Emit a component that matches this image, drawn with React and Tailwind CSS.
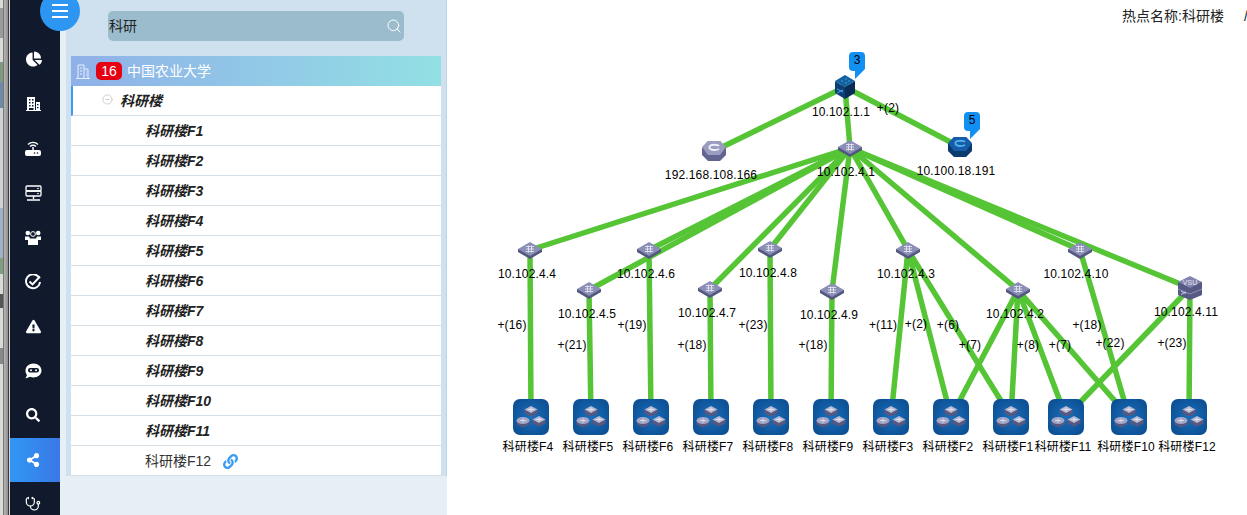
import { Search, Stethoscope, CircleMinus } from 'lucide-react'
import { FaChartPie, FaExclamationTriangle, FaSearch, FaShareAlt, FaLink } from 'react-icons/fa'

const floors = ['F1', 'F2', 'F3', 'F4', 'F5', 'F6', 'F7', 'F8', 'F9', 'F10', 'F11']

const sw = {
  n44: [530, 250, '10.102.4.4', 527, 274],
  n46: [649, 250, '10.102.4.6', 646, 274],
  n45: [589, 290, '10.102.4.5', 587, 314],
  n47: [710, 289, '10.102.4.7', 707, 313],
  n48: [770, 249, '10.102.4.8', 768, 273],
  n49: [832, 291, '10.102.4.9', 829, 315],
  n43: [908, 250, '10.102.4.3', 906, 274],
  n42: [1018, 290, '10.102.4.2', 1015, 314],
  n410: [1080, 250, '10.102.4.10', 1076, 274],
}

const leaves = {
  F4: [531, 528], F5: [591, 588], F6: [651, 648], F7: [711, 708], F8: [771, 768], F9: [831, 828],
  F3: [891, 888], F2: [951, 948], F1: [1011, 1008], F11: [1066, 1063], F10: [1129, 1126], F12: [1189, 1187],
}

const root = [845, 87]
const core = [850, 148]
const vsu = [1190, 288]

const down = [
  ['n44', 'F4'], ['n45', 'F5'], ['n46', 'F6'], ['n47', 'F7'], ['n48', 'F8'], ['n49', 'F9'],
  ['n43', 'F3'], ['n43', 'F2'], ['n43', 'F1'], ['n42', 'F2'], ['n42', 'F1'], ['n42', 'F11'], ['n42', 'F10'],
  ['n410', 'F10'],
]

const counts = [
  ['+(2)', 888, 108], ['+(16)', 512, 325], ['+(21)', 572, 345], ['+(19)', 632, 325], ['+(18)', 692, 345],
  ['+(23)', 753, 325], ['+(18)', 813, 345], ['+(11)', 883, 325], ['+(2)', 916, 324], ['+(6)', 948, 325],
  ['+(7)', 970, 345], ['+(8)', 1028, 345], ['+(7)', 1060, 345], ['+(18)', 1087, 325], ['+(22)', 1110, 343],
  ['+(23)', 1172, 343],
]

function BuildingIcon() {
  return (
    <svg width="15" height="14" viewBox="0 0 15 14" fill="#fff">
      <path d="M1 0h8v13h1V5h4v8h1v1H0v-1h1z" />
      <path d="M3 2h1.500v1.500H3zM6 2h1.500v1.500H6zM3 5h1.500v1.500H3zM6 5h1.500v1.500H6zM3 8h1.500v1.500H3zM6 8h1.500v1.500H6zM3 11h4.500v2H3zM11 7h1.500v1.300H11zM11 10h1.500v1.300H11z" fill="#111a2c" />
    </svg>
  )
}

function RouterIcon() {
  return (
    <svg width="18" height="16" viewBox="0 0 18 16" fill="none">
      <path d="M4 4.500a7 7 0 0 1 10 0M6 6.500a4.200 4.200 0 0 1 6 0" stroke="#fff" strokeWidth="1.300" />
      <path d="M9 7v4" stroke="#fff" strokeWidth="1.500" />
      <rect x="1" y="10" width="16" height="6" rx="2" fill="#fff" />
      <circle cx="10.500" cy="13" r="0.800" fill="#111a2c" />
      <circle cx="13.500" cy="13" r="0.800" fill="#111a2c" />
    </svg>
  )
}

function ServerIcon() {
  return (
    <svg width="17" height="16" viewBox="0 0 17 16" fill="none">
      <rect x="1" y="1" width="15" height="5" rx="1" stroke="#fff" strokeWidth="1.300" />
      <rect x="1" y="6" width="15" height="5" rx="1" stroke="#fff" strokeWidth="1.300" />
      <path d="M8.500 11v3M2 15h13" stroke="#fff" strokeWidth="1.400" />
      <circle cx="13" cy="3.500" r="0.800" fill="#fff" />
      <circle cx="13" cy="8.500" r="0.800" fill="#fff" />
    </svg>
  )
}

function UsersIcon() {
  return (
    <svg width="16" height="15" viewBox="0 0 16 15" fill="#fff">
      <circle cx="2.800" cy="3" r="2.300" />
      <circle cx="13.200" cy="3" r="2.300" />
      <circle cx="8" cy="4" r="2.400" fill="none" stroke="#fff" strokeWidth="1" />
      <path d="M0 6.500h4l1 2h6l1-2h4v3.500h-3V15H3v-5H0z" />
    </svg>
  )
}

function CheckIcon() {
  return (
    <svg width="17" height="16" viewBox="0 0 17 16" fill="none" stroke="#fff" strokeWidth="1.900">
      <path d="M13.800 3.300A7 7 0 1 0 15 8" />
      <path d="M4.500 7.500l3 3 7.500-8" />
    </svg>
  )
}

function BotIcon() {
  return (
    <svg width="17" height="16" viewBox="0 0 17 16">
      <path d="M8.500 0.500c4.400 0 8 3 8 7s-3.600 7-8 7c-1.200 0-2.400-.2-3.400-.7L0.500 15.500l1.500-3.500C1 10.800 .5 9.200 .5 7.500c0-4 3.600-7 8-7z" fill="#fff" />
      <rect x="3" y="5" width="11" height="4.500" rx="2.200" fill="#111a2c" />
      <circle cx="6" cy="7.200" r="1" fill="#fff" />
      <circle cx="11" cy="7.200" r="1" fill="#fff" />
    </svg>
  )
}

function Switch({ x, y }) {
  return (
    <g transform={`translate(${x - 12} ${y - 8})`}>
      <path d="M0 7v3l12 7 12-7V7z" fill="#54577f" />
      <path d="M12 0L24 7 12 14 0 7z" fill="#8b8eb5" />
      <path d="M8 4.500h8M8 7h8M8 9.500h8M10.500 3.500v7M13.500 3.500v7" stroke="#e4e5f0" strokeWidth="0.900" fill="none" />
    </g>
  )
}

function Cloud({ x, y, blue }) {
  return (
    <g transform={`translate(${x - 12} ${y - 10})`}>
      <path d="M6 0h12l6 7v7l-6 6H6l-6-6V7z" fill={blue ? '#0b3a70' : '#62658f'} />
      <path d="M6 0h12l6 6-6 8H6L0 6z" fill={blue ? '#155da8' : '#9a9cc0'} />
      <path d="M17 5c-1-1.500-8-2-9.500 .5-.8 2 1.500 3.500 4.500 3.500 2 0 4-.3 5-1.200" stroke={blue ? '#4fb0ee' : '#f0f0f8'} strokeWidth="1.800" fill="none" />
    </g>
  )
}

function RootCube({ x, y }) {
  return (
    <g transform={`translate(${x - 10} ${y - 12})`}>
      <path d="M0 6v12l10 6V12z" fill="#0c3f78" />
      <path d="M20 6v12l-10 6V12z" fill="#082c57" />
      <path d="M10 0l10 6-10 6L0 6z" fill="#13619f" />
      <path d="M6 6h2M10 4h2M10 8h2M13 6h2" stroke="#3c9bdc" strokeWidth="1.200" />
      <path d="M2 14l6 3M2 18l6-3" stroke="#4fa6e0" strokeWidth="1" />
    </g>
  )
}

function Vsu({ x, y }) {
  return (
    <g transform={`translate(${x - 12} ${y - 12})`}>
      <path d="M0 6v13l12 5 12-5V6z" fill="#565983" />
      <path d="M0 13l12 5 12-5" stroke="#8b8eb5" strokeWidth="1" fill="none" />
      <path d="M12 0l12 6-12 6L0 6z" fill="#8184ad" />
      <text x="12" y="8.500" textAnchor="middle" fontSize="7" fill="#e4e5f0">VSU</text>
      <path d="M3 15l5 2.500M3 18.500l5-2.500" stroke="#c9cbe0" strokeWidth="1" />
    </g>
  )
}

function Device({ x, y, round }) {
  return (
    <g transform={`translate(${x} ${y})`}>
      <path d="M0 3.500v4l6.500 3 6.500-3v-4z" fill="#565880" />
      {round ? (
        <ellipse cx="6.500" cy="3.500" rx="6.500" ry="3.500" fill="#a3a5c6" />
      ) : (
        <path d="M6.500 0l6.500 3.500-6.500 3.500L0 3.500z" fill="#b6b8d2" />
      )}
      <path d="M3.500 3.500h6M6.500 1.500v4" stroke="#eeeef6" strokeWidth="0.700" />
    </g>
  )
}

function Leaf({ x }) {
  return (
    <g transform={`translate(${x - 18} 399)`}>
      <rect width="36" height="36" rx="7" fill="url(#leafFill)" />
      <Device x={11.500} y={7} />
      <Device x={3.500} y={18} round />
      <Device x={19.500} y={17} />
    </g>
  )
}

function Badge({ x, y, n }) {
  return (
    <div className="absolute w-4 h-[28px]" style={{ left: x - 447, top: y }}>
      <svg width="16" height="28" viewBox="0 0 16 28" className="absolute inset-0">
        <path d="M4 0h8a4 4 0 0 1 4 4v13L6 27v-8H4a4 4 0 0 1-4-4V4a4 4 0 0 1 4-4z" fill="#1190f2" />
      </svg>
      <span className="absolute inset-x-0 top-0 text-center text-[12px] leading-[17px] text-black">{n}</span>
    </div>
  )
}

function Label({ x, y, children }) {
  return (
    <span
      className="absolute -translate-x-1/2 -translate-y-1/2 whitespace-nowrap text-[12px] leading-none tracking-[0.15px] text-black"
      style={{ left: x - 447, top: y }}
    >
      {children}
    </span>
  )
}

function NavIcon({ children, active }) {
  return (
    <div className={`h-[44.5px] flex items-center justify-center pr-[4px] text-white ${active ? 'bg-gradient-to-r from-[#2f97f4] to-[#3a78e6]' : ''}`}>
      {children}
    </div>
  )
}

export default function App() {
  const line = (key, a, b) => (
    <line key={key} x1={a[0]} y1={a[1]} x2={b[0]} y2={b[1]} stroke="#55c435" strokeWidth={5.500} />
  )

  return (
    <div className="relative flex w-[1247px] h-[515px] overflow-hidden bg-white font-['Liberation_Sans','Noto_Sans_CJK_SC',sans-serif]">

      {/* edge of the window behind */}
      <div className="flex w-[10px] shrink-0">
        <div className="w-[3px] flex flex-col bg-[#d9d9d6]">
          <div className="h-[30px] mt-[8px] bg-[#9a9a9a]" />
          <div className="h-[20px] mt-[24px] bg-[#7f9a7d]" />
          <div className="h-[26px] bg-[#6f8aa8]" />
          <div className="h-[100px] bg-[#cfd3d6]" />
          <div className="h-[50px] bg-[#9fb3c6]" />
          <div className="h-[16px] bg-[#7f9f7d]" />
          <div className="h-[14px] mt-[20px] bg-[#555]" />
          <div className="h-[16px] mt-[40px] bg-[#888]" />
        </div>
        <div className="w-[1px] bg-[#777]" />
        <div className="w-[4px] bg-gradient-to-r from-[#b5b5b5] to-[#8f8f8f]" />
        <div className="w-[1px] bg-[#3a3a3a]" />
        <div className="w-[1px] bg-[#d5d5d5]" />
      </div>

      {/* nav */}
      <nav className="w-[50px] shrink-0 bg-[#111a2c] pt-[37px]">
        <NavIcon><FaChartPie size={16} className="ml-[1px]" /></NavIcon>
        <NavIcon><BuildingIcon /></NavIcon>
        <NavIcon><RouterIcon /></NavIcon>
        <NavIcon><ServerIcon /></NavIcon>
        <NavIcon><UsersIcon /></NavIcon>
        <NavIcon><CheckIcon /></NavIcon>
        <NavIcon><FaExclamationTriangle size={15} /></NavIcon>
        <NavIcon><BotIcon /></NavIcon>
        <NavIcon><FaSearch size={14} /></NavIcon>
        <NavIcon active><FaShareAlt size={14} /></NavIcon>
        <NavIcon><Stethoscope size={16} strokeWidth={1.800} /></NavIcon>
      </nav>

      <button className="absolute left-[40px] top-[-9px] w-10 h-10 rounded-full bg-[#2d96f3] flex flex-col items-center justify-end gap-1 pb-[13px]">
        <span className="block w-4 h-[2px] bg-white" />
        <span className="block w-4 h-[2px] bg-white" />
        <span className="block w-4 h-[2px] bg-white" />
      </button>

      {/* tree panel */}
      <aside className="w-[387px] shrink-0 bg-[#e6eef6] pl-[6px]">
        <div className="h-[476px] bg-[#cfe1ef] pl-[5px] pr-[5px] border-r border-[#bcd5e6]">
          <div className="h-[56px] pl-[37px] pt-[11px]">
            <div className="w-[296px] h-[30px] rounded-[5px] bg-[#9bbccd] flex items-center justify-between pl-[1px] pr-[2px] text-[14px] text-[#222]">
              <span>科研</span>
              <Search size={16} strokeWidth={1.500} className="text-white -mt-[1px]" />
            </div>
          </div>
          <div className="w-[370px]">
            <div className="h-[30px] flex items-center pl-[5px] bg-gradient-to-r from-[#8fb0e8] to-[#92e0e4] text-[14px] text-white">
              <svg width="14" height="15" viewBox="0 0 14 15" fill="none" stroke="#fff" strokeWidth="0.900" className="opacity-90">
                <path d="M2 14V1h6v13M8 5h4v9M0 14.500h14M4 4h2M4 7h2M4 10h2M10 8h1M10 11h1" />
              </svg>
              <span className="ml-[6px] w-[26px] h-[18px] rounded-[5px] bg-[#e60012] text-center leading-[18px]">16</span>
              <span className="ml-[5px]">中国农业大学</span>
            </div>
            <div className="h-[30px] flex items-center bg-white border-l-2 border-b border-l-[#3b9bf2] border-b-[#d5dfe8] pl-[29px]">
              <CircleMinus size={11} strokeWidth={1.200} className="text-[#aaa] -mt-[3px]" />
              <span className="ml-[7px] mt-[1px] text-[14px] font-bold italic text-[#222]">科研楼</span>
            </div>
            {floors.map((f) => (
              <div key={f} className="h-[30px] flex items-center bg-white border-b border-[#d5dfe8] pl-[74px] pt-[2px] text-[14px] font-bold italic text-[#222]">
                科研楼{f}
              </div>
            ))}
            <div className="h-[30px] flex items-center bg-white border-b border-[#d5dfe8] pl-[74px] pt-[2px] text-[14px] text-[#333]">
              科研楼F12
              <FaLink size={15} className="ml-[12px] text-[#3b9bf2]" />
            </div>
          </div>
        </div>
      </aside>

      {/* topology */}
      <main className="relative flex-1">
        <svg width="800" height="515" viewBox="447 0 800 515" className="absolute inset-0">
          <defs>
            <radialGradient id="leafFill" cx="0.500" cy="0.500" r="0.700">
              <stop offset="0" stopColor="#1a6fbc" />
              <stop offset="1" stopColor="#0a4a8c" />
            </radialGradient>
          </defs>
          {line('r1', root, [714, 151])}
          {line('r2', root, core)}
          {line('r3', root, [960, 147])}
          {Object.keys(sw).map((k) => line(k, core, sw[k]))}
          {line('cv', core, vsu)}
          {down.map(([a, b]) => line(a + b, sw[a], [leaves[b][0], 417]))}
          {line('v1', vsu, [1066, 417])}
          {line('v2', vsu, [1189, 417])}
          <RootCube x={845} y={87} />
          <Cloud x={714} y={151} />
          <Cloud x={960} y={147} blue />
          <Switch x={850} y={148} />
          {Object.keys(sw).map((k) => <Switch key={k} x={sw[k][0]} y={sw[k][1]} />)}
          <Vsu x={1190} y={288} />
          {Object.keys(leaves).map((k) => <Leaf key={k} x={leaves[k][0]} />)}
        </svg>

        <Badge x={849} y={52} n="3" />
        <Badge x={964} y={112} n="5" />

        <Label x={841} y={112}>10.102.1.1</Label>
        <Label x={711} y={175}>192.168.108.166</Label>
        <Label x={846} y={172}>10.102.4.1</Label>
        <Label x={956} y={171}>10.100.18.191</Label>
        <Label x={1186} y={312}>10.102.4.11</Label>
        {Object.keys(sw).map((k) => <Label key={k} x={sw[k][3]} y={sw[k][4]}>{sw[k][2]}</Label>)}
        {Object.keys(leaves).map((k) => <Label key={k} x={leaves[k][1]} y={447}>科研楼{k}</Label>)}
        {counts.map(([t, x, y]) => <Label key={t + x} x={x} y={y}>{t}</Label>)}

        <div className="absolute left-[675px] top-[8px] text-[14px] leading-4 text-[#222] whitespace-nowrap">热点名称:科研楼</div>
        <div className="absolute left-[797px] top-[8px] text-[14px] leading-4 text-[#222]">/</div>
      </main>
    </div>
  )
}
